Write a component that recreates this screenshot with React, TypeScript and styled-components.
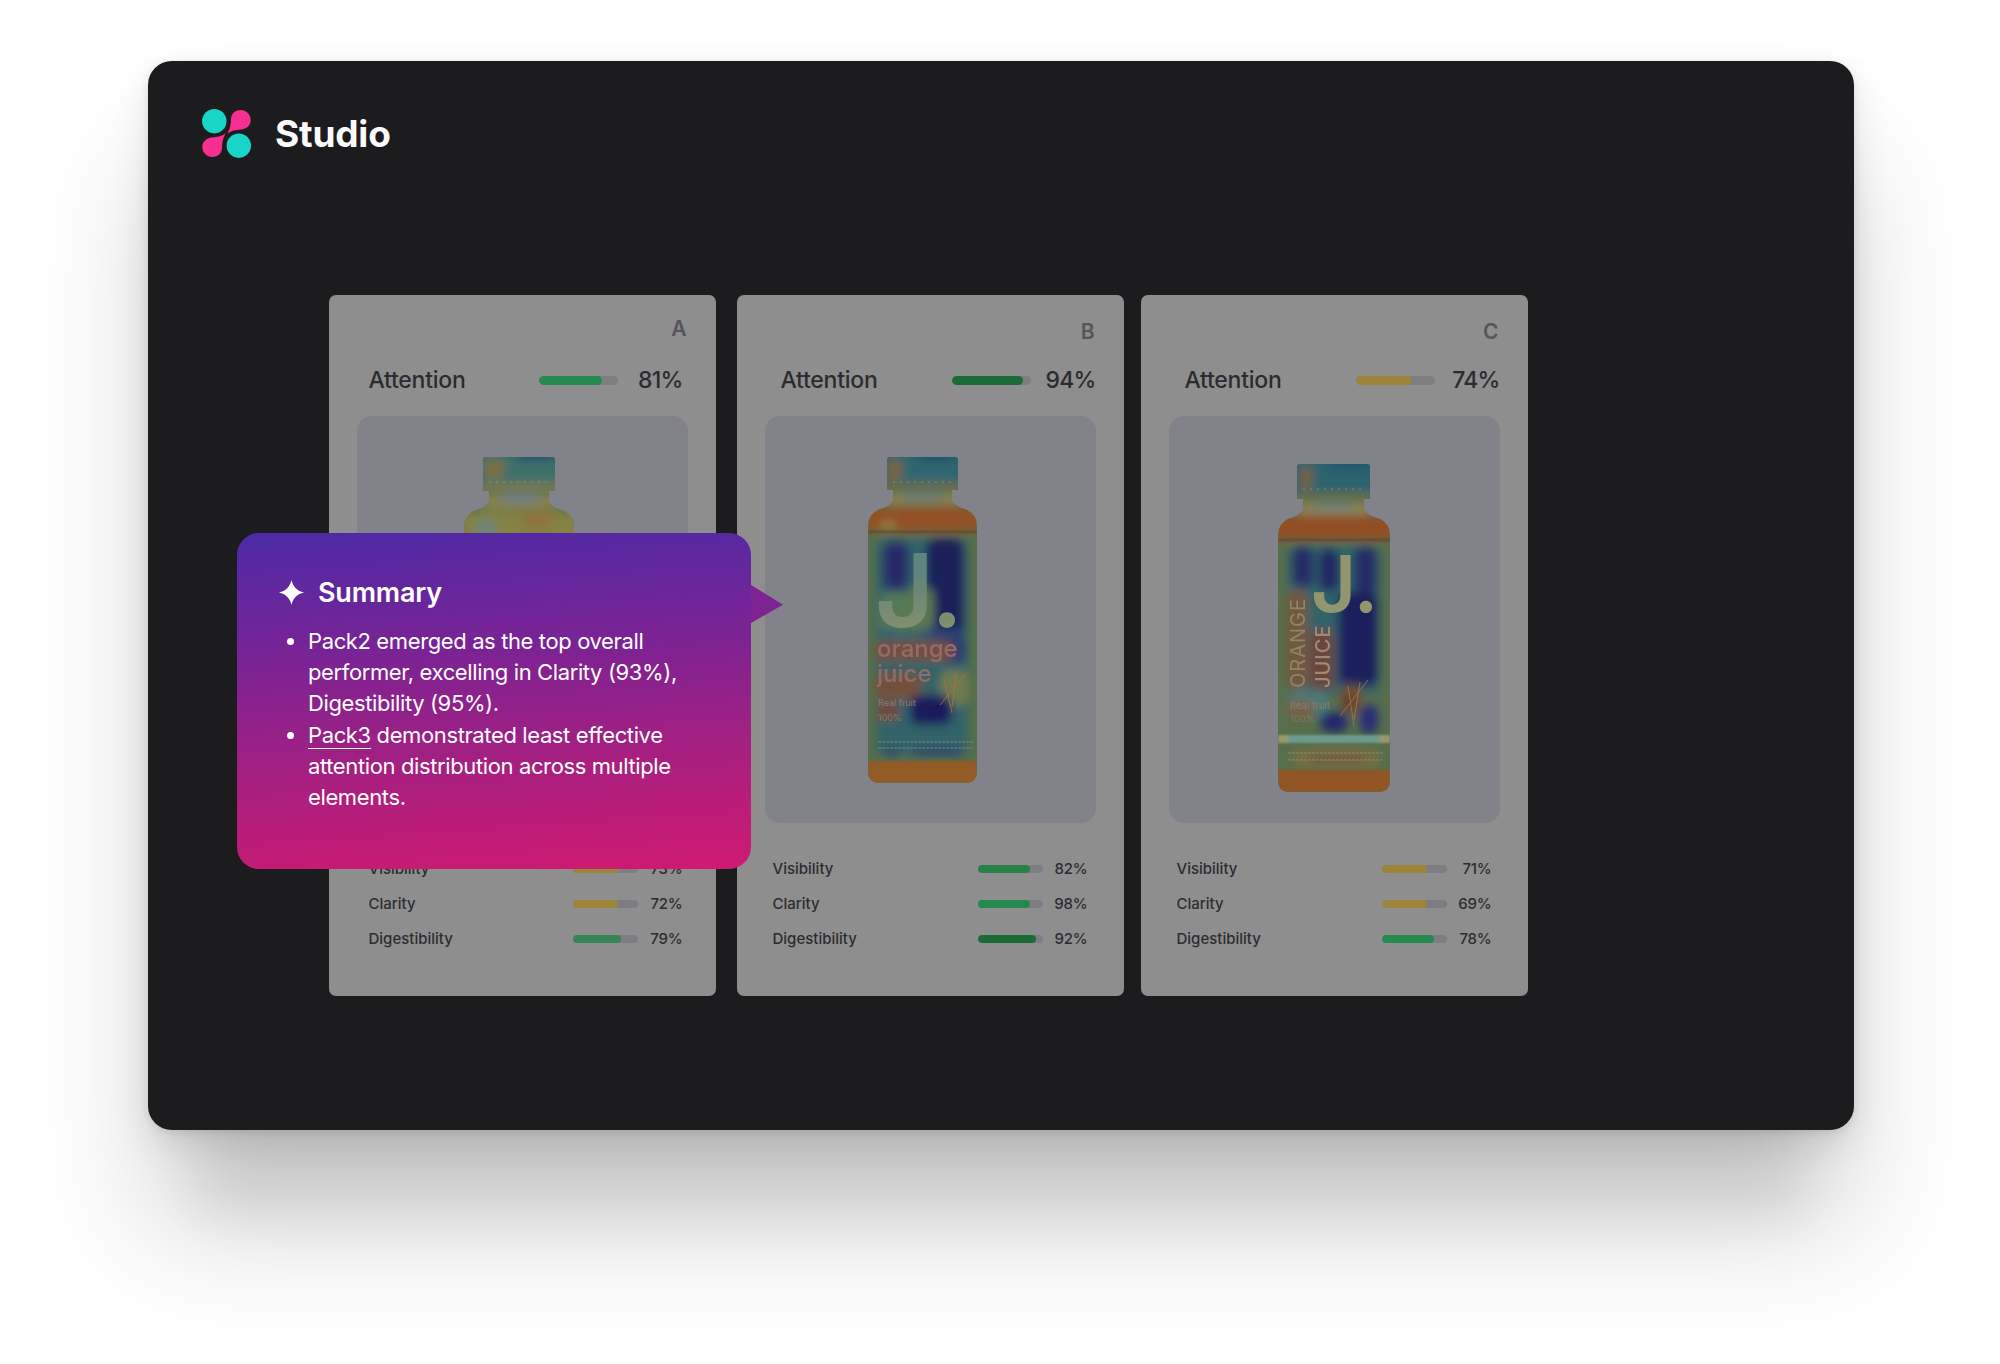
import { Fragment } from 'react';
import styled, { createGlobalStyle } from 'styled-components';

const GlobalStyle = createGlobalStyle`
  html, body { margin: 0; padding: 0; background: #fff; }
  body { font-family: Inter, "Noto Sans", "Liberation Sans", sans-serif; }
`;

const Page = styled.div`
  width: 2000px;
  height: 1364px;
  box-sizing: border-box;
  padding: 61px 146px 0 148px;
  overflow: hidden;
`;

const Window = styled.main`
  position: relative;
  height: 1069px;
  box-sizing: border-box;
  padding: 48px 0 0 54px;
  background: #1c1c1e;
  border-radius: 24px;
  box-shadow:
    0 2px 8px rgba(0, 0, 0, 0.1),
    0 14px 34px rgba(0, 0, 0, 0.1),
    0 130px 50px -50px rgba(0, 0, 0, 0.07),
    0 100px 120px rgba(0, 0, 0, 0.17);
`;

const Brand = styled.header`
  display: flex;
  align-items: center;
  gap: 24px;
  height: 49px;
`;

const BrandName = styled.h1`
  margin: 0;
  font-size: 37px;
  font-weight: 700;
  letter-spacing: -0.2px;
  color: #fbfafc;
`;

const Cards = styled.section`
  display: flex;
  gap: 17px;
  margin: 137px 0 0 126.5px;
`;

const Card = styled.article<{ $after?: number }>`
  width: 387px;
  height: 701px;
  box-sizing: border-box;
  padding: 0 28px;
  margin-right: ${p => p.$after ?? 0}px;
  background: #8e8e8e;
  border-radius: 7px;
  flex: none;
`;

const LetterSlot = styled.div<{ $top: number }>`
  height: 70px;
  box-sizing: border-box;
  padding: ${p => p.$top}px 1px 0 0;
  text-align: right;
  font-size: 21px;
  line-height: 24px;
  font-weight: 600;
  color: #55565a;
`;

const AttentionRow = styled.div<{ $left: number; $right: number }>`
  display: flex;
  align-items: center;
  height: 30px;
  margin-bottom: 21px;
  padding: 0 ${p => p.$right}px 0 ${p => p.$left}px;
  font-size: 23px;
  font-weight: 500;
  letter-spacing: -0.25px;
  color: #2c2c30;
`;

const RowLabel = styled.span`
  flex: 1;
`;

const Track = styled.div<{ $w: number; $h: number }>`
  width: ${p => p.$w}px;
  height: ${p => p.$h}px;
  border-radius: ${p => p.$h / 2}px;
  background: #7e7e82;
  overflow: hidden;
  flex: none;
`;

const Fill = styled.div<{ $color: string }>`
  height: 100%;
  border-radius: inherit;
  background: ${p => p.$color};
`;

const Percent = styled.span<{ $w: number; $tight?: boolean }>`
  width: ${p => p.$w}px;
  text-align: right;
  flex: none;
  letter-spacing: ${p => (p.$tight ? '-0.8px' : '-0.2px')};
`;

const ImageBox = styled.div<{ $top: number; $shift: number }>`
  display: flex;
  justify-content: center;
  align-items: flex-start;
  height: 407px;
  box-sizing: border-box;
  padding-top: ${p => p.$top}px;
  padding-right: ${p => p.$shift}px;
  background: #81828a;
  border-radius: 15px;
`;

const Metrics = styled.div<{ $left: number; $right: number }>`
  margin-top: 28px;
  padding: 0 ${p => p.$right}px 0 ${p => p.$left}px;
`;

const MetricRow = styled.div`
  display: flex;
  align-items: center;
  height: 35px;
  font-size: 15px;
  font-weight: 500;
  color: #2c2c30;
`;

const Popup = styled.aside`
  position: absolute;
  left: 89px;
  top: 472px;
  width: 514px;
  height: 336px;
  box-sizing: border-box;
  padding: 42px 0 0 42px;
  border-radius: 22px;
  background: linear-gradient(176deg, #4c2aa6 0%, #7a2394 35%, #a81f80 68%, #d01a70 100%);
  color: #fff;

  &::after {
    content: '';
    position: absolute;
    left: 100%;
    top: 52px;
    width: 32px;
    height: 38px;
    background: #7d2392;
    clip-path: polygon(0 0, 100% 52%, 0 100%);
  }
`;

const PopupTitle = styled.h2`
  display: flex;
  align-items: center;
  gap: 14px;
  margin: 0 0 17px;
  height: 34px;
  font-size: 27px;
  font-weight: 600;
  letter-spacing: -0.2px;
`;

const Bullets = styled.ul`
  margin: 0;
  padding: 0 0 0 29px;
  font-size: 22px;
  line-height: 31.2px;
  letter-spacing: -0.38px;
  width: 420px;
`;

const Underlined = styled.span`
  border-bottom: 1px solid #fff;
`;

const BottleSvg = styled.svg`
  display: block;
  flex: none;
  filter: saturate(0.84) brightness(0.9);
`;

type Spot = [number, number, number, number, string];

type BottleSpec = {
  id: string;
  w: number;
  h: number;
  capL: number;
  capR: number;
  capH: number;
  spots: Spot[];
  bands: Spot[];
  copy: { text: string; x: number; y: number; size: number; fill: string; weight?: number; turn?: boolean; spacing?: number }[];
  fine: [number, number, number][];
  leaf?: string[];
};

// spots are [x, y, width, height, colour] of the blurred heat patches
const bottles: Record<'a' | 'b' | 'c', BottleSpec> = {
  a: {
    id: 'a', w: 110, h: 326, capL: 19, capR: 91, capH: 34,
    spots: [
      [10, -8, 90, 36, '#3c7f78'],
      [50, -8, 44, 12, '#1f5f80'],
      [20, 2, 20, 20, '#8f7a35'],
      [14, 26, 84, 8, '#8a8a46'],
      [16, 38, 80, 14, '#99914c'],
      [36, 37, 40, 8, '#7790a0'],
      [-6, 54, 124, 30, '#94903e'],
      [58, 54, 30, 16, '#a4803a'],
      [12, 62, 20, 18, '#6f948a'],
    ],
    bands: [],
    copy: [],
    fine: [],
  },
  b: {
    id: 'b', w: 109, h: 326, capL: 19, capR: 90, capH: 33,
    spots: [
      [10, -8, 90, 36, '#2b7480'],
      [46, -8, 44, 12, '#1e5c80'],
      [19, 2, 15, 22, '#8f7032'],
      [14, 26, 84, 6, '#7e7c3e'],
      [16, 37, 78, 10, '#a49150'],
      [34, 36, 42, 7, '#6f8c8e'],
      [-8, 50, 125, 24, '#b0581f'],
      [12, 64, 16, 10, '#a88a38'],
      [8, 82, 92, 216, '#2f6f78'],
      [15, 85, 26, 48, '#2a2f80'],
      [58, 82, 38, 100, '#1e2470'],
      [38, 130, 28, 44, '#5f8850'],
      [12, 136, 28, 40, '#5a8a5c'],
      [52, 172, 42, 8, '#2f4f90'],
      [70, 180, 28, 26, '#28408a'],
      [14, 172, 16, 6, '#2f5f90'],
      [6, 184, 80, 20, '#85563c'],
      [6, 217, 48, 26, '#84583c'],
      [72, 213, 28, 36, '#7a8a50'],
      [42, 238, 42, 30, '#1a1f70'],
      [8, 246, 24, 18, '#80503e'],
      [14, 292, 18, 6, '#283a90'],
      [44, 292, 52, 6, '#283a90'],
    ],
    bands: [
      [0, 74, 109, 1.5, '#7d3a1e'],
      [0, 304, 109, 22, '#ad641f'],
    ],
    copy: [
      { text: 'J.', x: 7, y: 170, size: 102, fill: 'url(#jb)', weight: 600 },
      { text: 'orange', x: 9, y: 200, size: 24, fill: '#ad7472', weight: 500 },
      { text: 'juice', x: 9, y: 225, size: 24, fill: '#a8766a', weight: 500 },
      { text: 'Real fruit', x: 10, y: 249, size: 9, fill: '#a08672' },
      { text: '100%', x: 10, y: 264, size: 9, fill: '#9c8262' },
    ],
    fine: [[10, 105, 285], [10, 104, 291]],
    leaf: ['M72 248 L98 216', 'M76 222 L84 256', 'M88 216 L84 250'],
  },
  c: {
    id: 'c', w: 112, h: 328, capL: 19, capR: 92, capH: 35,
    spots: [
      [10, -8, 92, 38, '#26707f'],
      [50, -8, 46, 12, '#1f5f80'],
      [22, 2, 12, 24, '#8c6c34'],
      [16, 29, 80, 5, '#7e7c3e'],
      [18, 39, 76, 12, '#a49150'],
      [34, 40, 44, 6, '#6f9090'],
      [-8, 52, 128, 23, '#b0521f'],
      [10, 82, 92, 148, '#2f6f78'],
      [14, 83, 22, 40, '#27307e'],
      [41, 85, 20, 42, '#232a78'],
      [76, 83, 23, 48, '#27307e'],
      [60, 128, 40, 94, '#1f2272'],
      [8, 126, 22, 100, '#85603f'],
      [32, 166, 24, 60, '#7e4c3c'],
      [10, 226, 40, 28, '#458a8a'],
      [8, 236, 30, 18, '#876a4c'],
      [62, 220, 22, 30, '#7a5a30'],
      [66, 232, 10, 12, '#7f2f28'],
      [42, 248, 28, 20, '#242a88'],
      [82, 240, 18, 30, '#283090'],
      [14, 284, 88, 20, '#857a3e'],
      [30, 292, 60, 5, '#7f5040'],
    ],
    bands: [
      [0, 75, 112, 1.5, '#7d3a1e'],
      [0, 271, 112, 8, '#6fae9c'],
      [0, 271, 10, 8, '#a8ab6e'],
      [102, 271, 10, 8, '#a8ab6e'],
      [0, 306, 112, 22, '#ad5c1f'],
    ],
    copy: [
      { text: 'J.', x: 33, y: 148, size: 78, fill: '#a2a872', weight: 600 },
      { text: 'ORANGE', x: 27, y: 224, size: 20, fill: '#9e956a', weight: 400, turn: true, spacing: 1 },
      { text: 'JUICE', x: 52, y: 224, size: 20, fill: '#ae9a78', weight: 500, turn: true, spacing: 1 },
      { text: 'Real fruit', x: 12, y: 245, size: 9.5, fill: '#a08672' },
      { text: '100%', x: 12, y: 258, size: 9.5, fill: '#968066' },
    ],
    fine: [[10, 106, 289], [10, 104, 296]],
    leaf: ['M62 252 L90 216', 'M70 222 L76 262', 'M82 218 L76 256'],
  },
};

function silhouette({ w, h, capL: l, capR: r, capH: c }: BottleSpec) {
  return `M${l + 3} 0 H${r - 3} Q${r} 0 ${r} 3 V${c} H${r - 6} V${c + 11} Q${r - 4} ${c + 16} ${w - 10} ${c + 20} Q${w} ${c + 25} ${w} ${c + 37} V${h - 12} Q${w} ${h} ${w - 12} ${h} H12 Q0 ${h} 0 ${h - 12} V${c + 37} Q0 ${c + 25} 10 ${c + 20} Q${l + 4} ${c + 16} ${l + 6} ${c + 11} V${c} H${l} V3 Q${l} 0 ${l + 3} 0Z`;
}

function Bottle({ spec }: { spec: BottleSpec }) {
  const { id, w, h, spots, bands, copy, fine, leaf, capL, capR } = spec;
  return (
    <BottleSvg width={w} height={h} viewBox={`0 0 ${w} ${h}`}>
      <defs>
        <clipPath id={`clip-${id}`}><path d={silhouette(spec)} /></clipPath>
        <filter id={`heat-${id}`} x="-20%" y="-20%" width="140%" height="140%">
          <feGaussianBlur stdDeviation="5" />
        </filter>
        <filter id={`edge-${id}`} x="-5%" y="-20%" width="110%" height="140%">
          <feGaussianBlur stdDeviation="0.9" />
        </filter>
        <filter id={`soft-${id}`} x="-5%" y="-5%" width="110%" height="110%">
          <feGaussianBlur stdDeviation="0.6" />
        </filter>
        <linearGradient id="jb" x1="0" y1="0" x2="0" y2="1">
          <stop offset="0.35" stopColor="#639488" />
          <stop offset="1" stopColor="#a0a66c" />
        </linearGradient>
      </defs>
      <g clipPath={`url(#clip-${id})`}>
        <rect width={w} height={h} fill="#5c7c4e" />
        <g filter={`url(#heat-${id})`}>
          {spots.map(([x, y, sw, sh, fill], i) => (
            <rect key={i} x={x} y={y} width={sw} height={sh} rx="9" fill={fill} />
          ))}
        </g>
        <g filter={`url(#edge-${id})`}>
          {bands.map(([x, y, bw, bh, fill], i) => (
            <rect key={i} x={x} y={y} width={bw} height={bh} fill={fill} />
          ))}
        </g>
        <line x1={capL + 6} x2={capR - 6} y1="25" y2="25" stroke="#b8b898" strokeWidth="0.8" strokeDasharray="2 5" opacity="0.7" />
        <g filter={`url(#soft-${id})`}>
          {copy.map(c => (
            <text
              key={c.text}
              x={c.x}
              y={c.y}
              fontSize={c.size}
              fill={c.fill}
              fontWeight={c.weight ?? 400}
              letterSpacing={c.spacing}
              fontFamily="Inter, sans-serif"
              transform={c.turn ? `rotate(-90 ${c.x} ${c.y})` : undefined}
            >
              {c.text}
            </text>
          ))}
          {fine.map(([x1, x2, y]) => (
            <line key={y} x1={x1} x2={x2} y1={y} y2={y} stroke="#a4ae80" strokeWidth="1.3" strokeDasharray="3 1" opacity="0.45" />
          ))}
          {leaf?.map(d => (
            <path key={d} d={d} stroke="#b8803a" strokeWidth="0.9" fill="none" />
          ))}
        </g>
      </g>
    </BottleSvg>
  );
}

function Logo() {
  const drop = 'M29 10 C29 5 33 1 38.5 1 C44.5 1 48.7 5.5 48.7 11 C48.7 16.5 44.5 20 39 20.5 C34 21 29.5 21.5 25.5 24.5 C28 20 29 15 29 10Z';
  return (
    <svg width="49" height="49" viewBox="0 0 49 49">
      <circle cx="12.3" cy="12.2" r="12.2" fill="#18d5c8" />
      <circle cx="36.8" cy="36.7" r="12.2" fill="#18d5c8" />
      <path d={drop} fill="#f62f90" />
      <path d={drop} fill="#f62f90" transform="rotate(180 24.5 24.5)" />
    </svg>
  );
}

function Sparkle() {
  return (
    <svg width="25" height="25" viewBox="0 0 25 25">
      <path d="M12.5 0 C13.8 6.5 18.5 11.2 25 12.5 C18.5 13.8 13.8 18.5 12.5 25 C11.2 18.5 6.5 13.8 0 12.5 C6.5 11.2 11.2 6.5 12.5 0Z" fill="#fff" />
    </svg>
  );
}

const green = '#248a4f';
const deep = '#1d6a39';
const soft = '#378556';
const amber = '#9c853a';

const cards = [
  {
    key: 'a', letter: 'A', after: 4, letterTop: 22, attInset: [12, 5], metInset: [12, 5], top: 41, shift: 6,
    spec: bottles.a, attention: { value: '81%', fill: 81, color: green },
    metrics: [
      { label: 'Visibility', value: '73%', fill: 70, color: amber },
      { label: 'Clarity', value: '72%', fill: 70, color: amber },
      { label: 'Digestibility', value: '79%', fill: 75, color: soft },
    ],
  },
  {
    key: 'b', letter: 'B', after: 0, letterTop: 25, attInset: [16, 0], metInset: [8, 8], top: 41, shift: 16,
    spec: bottles.b, attention: { value: '94%', fill: 90, color: deep },
    metrics: [
      { label: 'Visibility', value: '82%', fill: 80, color: '#2a8048' },
      { label: 'Clarity', value: '98%', fill: 80, color: green },
      { label: 'Digestibility', value: '92%', fill: 90, color: deep },
    ],
  },
  {
    key: 'c', letter: 'C', after: 0, letterTop: 25, attInset: [16, 0], metInset: [8, 8], top: 48, shift: 0,
    spec: bottles.c, attention: { value: '74%', fill: 71, color: amber },
    metrics: [
      { label: 'Visibility', value: '71%', fill: 70, color: amber },
      { label: 'Clarity', value: '69%', fill: 70, color: amber },
      { label: 'Digestibility', value: '78%', fill: 80, color: green },
    ],
  },
];

export default function App() {
  return (
    <Fragment>
      <GlobalStyle />
      <Page>
        <Window>
          <Brand>
            <Logo />
            <BrandName>Studio</BrandName>
          </Brand>
          <Cards>
            {cards.map(c => (
              <Card key={c.key} $after={c.after}>
                <LetterSlot $top={c.letterTop}>{c.letter}</LetterSlot>
                <AttentionRow $left={c.attInset[0]} $right={c.attInset[1]}>
                  <RowLabel>Attention</RowLabel>
                  <Track $w={79} $h={9}>
                    <Fill $color={c.attention.color} style={{ width: `${c.attention.fill}%` }} />
                  </Track>
                  <Percent $w={65} $tight>{c.attention.value}</Percent>
                </AttentionRow>
                <ImageBox $top={c.top} $shift={c.shift}>
                  <Bottle spec={c.spec} />
                </ImageBox>
                <Metrics $left={c.metInset[0]} $right={c.metInset[1]}>
                  {c.metrics.map(m => (
                    <MetricRow key={m.label}>
                      <RowLabel>{m.label}</RowLabel>
                      <Track $w={65} $h={8}>
                        <Fill $color={m.color} style={{ width: `${m.fill}%` }} />
                      </Track>
                      <Percent $w={45}>{m.value}</Percent>
                    </MetricRow>
                  ))}
                </Metrics>
              </Card>
            ))}
          </Cards>
          <Popup>
            <PopupTitle>
              <Sparkle />
              Summary
            </PopupTitle>
            <Bullets>
              <li>Pack2 emerged as the top overall performer, excelling in Clarity (93%), Digestibility (95%).</li>
              <li><Underlined>Pack3</Underlined> demonstrated least effective attention distribution across multiple elements.</li>
            </Bullets>
          </Popup>
        </Window>
      </Page>
    </Fragment>
  );
}
